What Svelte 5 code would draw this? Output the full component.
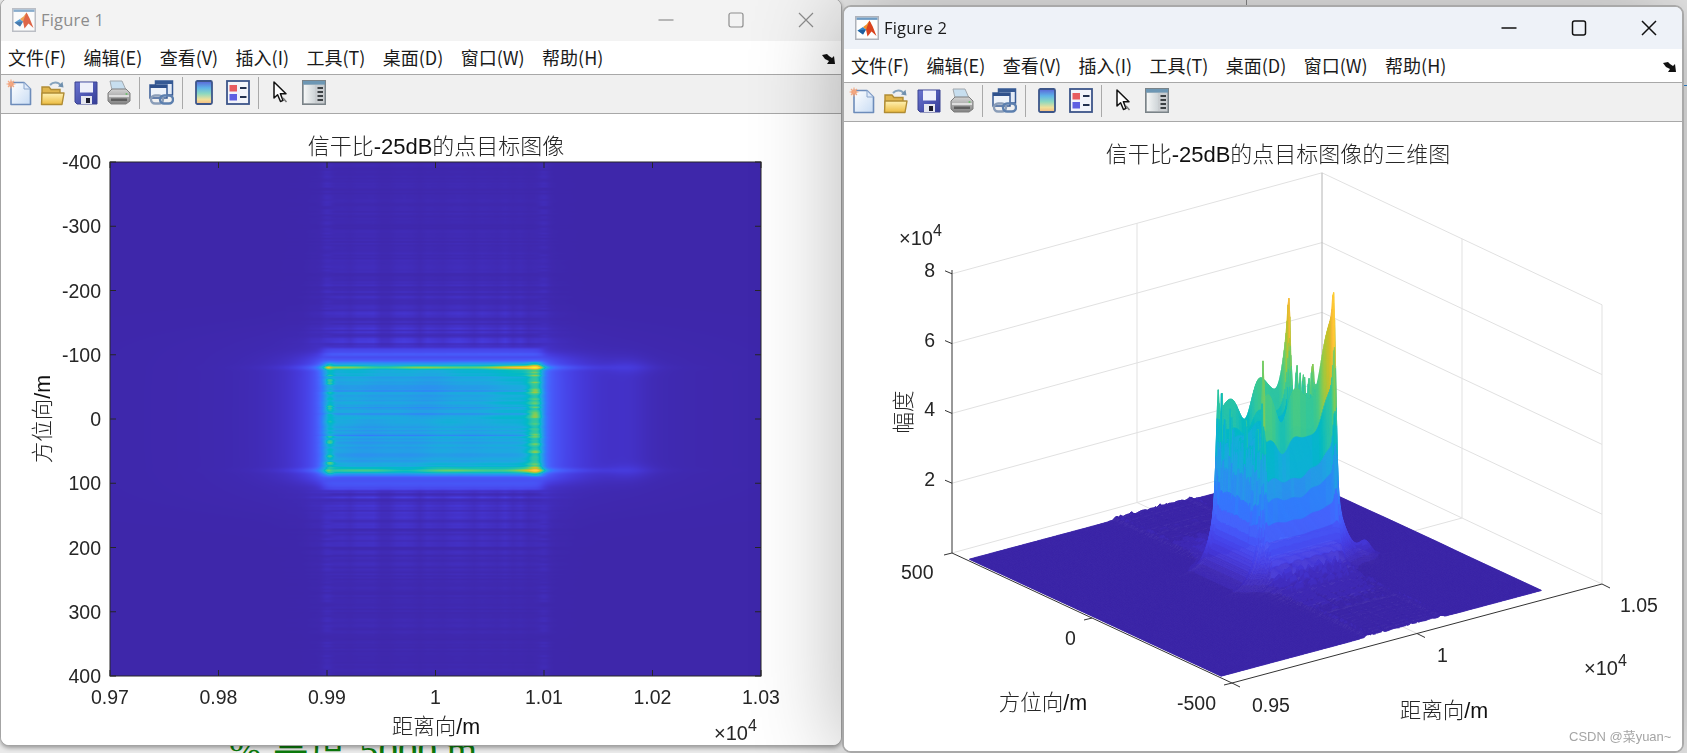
<script>
  import { onMount } from 'svelte';

  const menus = ['文件(F)', '编辑(E)', '查看(V)', '插入(I)', '工具(T)', '桌面(D)', '窗口(W)', '帮助(H)'];

  // ---- Figure 1 axes ----
  const px0 = 110, px1 = 761, py0 = 162, py1 = 676;
  const xTicks = ['0.97', '0.98', '0.99', '1', '1.01', '1.02', '1.03'].map((label, i) => ({ label, x: px0 + (i * (px1 - px0)) / 6 }));
  const yTicks = ['-400', '-300', '-200', '-100', '0', '100', '200', '300', '400'].map((label, i) => ({ label, y: py0 + (i * (py1 - py0)) / 8 }));

  // ---- Figure 2 box (parallel projection) ----
  const F = [1232, 683], Rr = [1602, 584], L = [952, 553], B = [1322, 452];
  const ZS = 34.9;
  const lerp = (a, b, t) => [a[0] + (b[0] - a[0]) * t, a[1] + (b[1] - a[1]) * t];
  const wallZ = [0, 2, 4, 6, 8];
  const mids = { lf: lerp(L, F, 0.5), fr: lerp(F, Rr, 0.5), lb: lerp(L, B, 0.5), br: lerp(B, Rr, 0.5) };
  const zTicks = [['8', 8], ['6', 6], ['4', 4], ['2', 2]];

  // ---- parula ----
  const P = [
    [.2422,.1504,.6603],[.2578,.1818,.7511],[.2706,.2147,.8364],[.2783,.2559,.8991],[.2813,.3006,.9414],[.2795,.3447,.9717],
    [.2699,.3892,.9906],[.2440,.4358,.9988],[.1963,.4847,.9892],[.1786,.5289,.9682],[.1687,.5703,.9359],[.1460,.6091,.9079],
    [.1248,.6459,.8883],[.0952,.6798,.8598],[.0297,.7082,.8163],[.0067,.7312,.7660],[.0964,.7500,.7120],[.1717,.7670,.6554],
    [.2161,.7843,.5923],[.2906,.7973,.5188],[.3909,.8029,.4354],[.5044,.7993,.3480],[.6174,.7876,.2612],[.7242,.7698,.1910],
    [.8203,.7498,.1535],[.9035,.7330,.1774],[.9728,.7298,.2394],[.9970,.7659,.2199],[.9892,.8136,.1885],[.9676,.8639,.1643],
    [.9597,.9135,.1423],[.9691,.9606,.1064],[.9769,.9839,.0805]
  ];
  function parula(c) {
    c = Math.max(0, Math.min(1, c)) * (P.length - 1);
    const i = Math.min(P.length - 2, Math.floor(c)), f = c - i;
    return [0, 1, 2].map((k) => 255 * (P[i][k] * (1 - f) + P[i + 1][k] * f));
  }

  // ---- shared amplitude model (units: 1e4), u = (range-1)*1000, y = azimuth in m ----
  const sig = (t) => 1 / (1 + Math.exp(-t));
  const h = (i) => { const s = Math.sin(i * 127.1 + 311.7) * 43758.5453; return s - Math.floor(s); };
  const sn = (t, seed) => { const i = Math.floor(t), f = t - i; return h(i + seed) * (1 - f) + h(i + 1 + seed) * f; };

  function amp(u, y) {
    const ay = Math.abs(y);
    const n1 = sn(y / 2.6, 7), n2 = sn(y / 2.6, 211), n3 = sn(y / 3.4, 503);
    const rx = sig((u + 10.3) / 0.25) * sig((9.8 - u) / 0.25);
    const ry = sig((88 - ay) / 1.5), ry2 = sig((110 - ay) / 1.5);
    let z = 0.02;
    if (rx > 0.001) {
      const wave = 1 + 0.035 * Math.sin(u * 0.5 + Math.sign(y)) + 0.02 * Math.sin(u * 1.3 + y * 0.02);
      const base = 2.95 * (0.89 + 0.2 * n1) * (n2 > 0.86 ? 0.82 : 1);
      z += (base * wave + 0.85 * Math.exp((u - 9.5) / 3)) * rx * ry;
      const e = Math.exp(-(((ay - 80) / 2.9) ** 2));
      const ridgeWave = 1 + 0.3 * Math.sin(u * 0.75 + (y > 0 ? 0.4 : 2.2));
      const ridge = (y > 0 ? 1.3 : 1.5) * ridgeWave
        + (y > 0 ? 1.0 : 1.2) * Math.exp((u - 9.4) / 4.5)
        + (y > 0 ? 0.8 : 0.95) * Math.exp((u - 9.4) / 0.9);
      z += e * ridge * rx;
      // sharp corner spikes
      const e2 = Math.exp(-(((ay - 80) / 2.4) ** 2));
      z += e2 * (y > 0 ? 0.5 : 0.7) * Math.exp(-(((u - 9.2) / 0.38) ** 2));
      z += e2 * (y > 0 ? 1.1 : 1.6) * Math.exp(-(((u + 9.9) / 0.3) ** 2));
      z += 0.5 * rx * Math.exp(-(((ay - 76) / 9) ** 2));
      const col = (1 - e) * rx * ry;
      z += col * Math.exp(-(((u - 9.3) / 0.7) ** 2)) * (1.0 + 2.2 * n2 * n2 * n2);
      z += col * Math.exp(-(((u + 9.8) / 0.42) ** 2)) * (0.7 + 2.0 * n3 * n3 * n3);
      z += 1.1 * rx * (ry2 - ry) * (0.85 + 0.3 * n1);
    }
    if (ay >= 100) {
      const rxo = sig((u + 10.3) / 1.0) * sig((9.8 - u) / 1.0);
      const lv = (0.06 + 0.42 * Math.exp(-(ay - 110) / 70)) * (0.2 + 1.05 * n1) * (1 - ry2 * 0.9) * (0.65 + 0.7 * sn(u * 1.4, 91));
      z += rxo * lv;
      z += 0.14 * Math.exp(-(((Math.abs(u) - 10) / 0.5) ** 2)) * n2 * (1 - ry2);
      if (ay > 432) z += 0.22 * rxo * Math.max(0, sn(u * 1.7, 33) - 0.55) * n3;
    }
    const d = u < -10.3 ? -10.3 - u : u > 9.8 ? u - 9.8 : 0;
    const hy = sig((97 - ay) / 6);
    const k = u < 0 ? 1.9 : 3.1;
    let hal = hy * 1.5 * Math.exp(-d / k);
    hal += Math.exp(-(((ay - 80) / 4) ** 2)) * 0.8 * Math.exp(-d / (k * 1.15));
    hal += 0.16 * Math.exp(-d / 9) * sig((135 - ay) / 16);
    hal += 0.14 * hy * Math.exp(-(((u - 17.8) / 1.7) ** 2)) + 0.2 * Math.exp(-(((ay - 80) / 10) ** 2)) * Math.exp(-(((u - 17.8) / 2.4) ** 2));
    z += hal * (1 - rx);
    return z;
  }

  let heat, surf;

  function drawHeat() {
    const W = heat.width, H = heat.height, ctx = heat.getContext('2d');
    const im = ctx.createImageData(W, H);
    for (let j = 0; j < H; j++) {
      const y = -400 + (800 * (j + 0.5)) / H;
      for (let i = 0; i < W; i++) {
        const u = -30 + (60 * (i + 0.5)) / W;
        const c = parula(amp(u, y) / 8.2);
        const o = (j * W + i) * 4;
        im.data[o] = c[0]; im.data[o + 1] = c[1]; im.data[o + 2] = c[2]; im.data[o + 3] = 255;
      }
    }
    ctx.putImageData(im, 0, 0);
  }

  function drawSurf() {
    const ctx = surf.getContext('2d');
    ctx.translate(-844, -122);
    const nr = 340, ns = 400, r0 = 0.004, r1 = 0.87, s0 = 0.044, s1 = 0.944;
    const Z = new Float32Array((nr + 1) * (ns + 1));
    for (let i = 0; i <= nr; i++) for (let j = 0; j <= ns; j++) {
      const r = r0 + ((r1 - r0) * i) / nr, s = s0 + ((s1 - s0) * j) / ns;
      Z[i * (ns + 1) + j] = amp(-50 + r * 100, (s - 0.5) * 1000);
    }
    const cols = [];
    for (let k = 0; k < 64; k++) { const c = parula(k / 63); cols.push(`rgb(${c[0] | 0},${c[1] | 0},${c[2] | 0})`); }
    const pt = (i, j) => {
      const r = r0 + ((r1 - r0) * i) / nr, s = s0 + ((s1 - s0) * j) / ns;
      return [F[0] + r * (Rr[0] - F[0]) + s * (L[0] - F[0]), F[1] + r * (Rr[1] - F[1]) + s * (L[1] - F[1]) - Z[i * (ns + 1) + j] * ZS];
    };
    ctx.lineWidth = 0.6;
    for (let i = nr - 1; i >= 0; i--) for (let j = ns - 1; j >= 0; j--) {
      const a = pt(i, j), b = pt(i + 1, j), c = pt(i + 1, j + 1), d = pt(i, j + 1);
      const m = (Z[i * (ns + 1) + j] + Z[(i + 1) * (ns + 1) + j] + Z[(i + 1) * (ns + 1) + j + 1] + Z[i * (ns + 1) + j + 1]) / 4;
      const col = cols[Math.min(63, Math.floor((m / 8.2) * 64))];
      ctx.fillStyle = col; ctx.strokeStyle = col;
      ctx.beginPath();
      ctx.moveTo(a[0], a[1]); ctx.lineTo(b[0], b[1]); ctx.lineTo(c[0], c[1]); ctx.lineTo(d[0], d[1]); ctx.closePath();
      ctx.fill(); ctx.stroke();
    }
  }

  onMount(() => { drawHeat(); drawSurf(); });
</script>

{#snippet logo()}
  <svg class="logo" width="24" height="24" viewBox="0 0 24 24">
    <rect x="0.75" y="0.75" width="22.5" height="22.5" fill="#fdfdfd" stroke="#aeb2ba" stroke-width="1.5" />
    <rect x="1.5" y="1.5" width="21" height="2.4" fill="#6f9cc4" />
    <path d="M2.5 14.5 L8 11 L11 13.5 L8 18.5z" fill="#2f86cc" />
    <path d="M8 11 L11.5 8.5 L14.5 4.5 L16 8 L11 13.5z" fill="#ee8f2c" />
    <path d="M11 13.5 L14.5 4.5 L17.5 10 L21.5 20 L16.5 15.5 L12.5 20.5z" fill="#d9431e" />
    <path d="M2.5 14.5 L11 13.5 L8 18.5z" fill="#1f5d9c" />
  </svg>
{/snippet}

{#snippet toolbar()}
  <div class="toolbar">
    <span class="btn">
      <svg width="26" height="27" viewBox="0 0 26 27">
        <defs><linearGradient id="pg" x1="0" y1="0" x2="1" y2="1"><stop offset="0" stop-color="#fff" /><stop offset="1" stop-color="#c8dcf4" /></linearGradient></defs>
        <path d="M5 3.5 H18 L24.5 10 V25.5 H5z" fill="url(#pg)" stroke="#6d8cba" stroke-width="1.6" stroke-linejoin="round" />
        <path d="M18 3.5 V10 H24.5z" fill="#dfeafa" stroke="#8ba6cc" />
        <circle cx="5" cy="5" r="2.6" fill="#ee8f56" />
        <path d="M5 0.5 V9.5 M0.5 5 H9.5 M2 2 L8 8 M8 2 L2 8" stroke="#f2a884" stroke-width="1.1" />
      </svg>
    </span>
    <span class="btn">
      <svg width="25" height="26" viewBox="0 0 25 26">
        <defs><linearGradient id="fg" x1="0" y1="0" x2="0" y2="1"><stop offset="0" stop-color="#fff2b4" /><stop offset="1" stop-color="#ecbb3f" /></linearGradient></defs>
        <path d="M2 24 V7 H9 L11 9.5 H20 V24z" fill="#e0b64e" stroke="#b08c34" stroke-width="1.4" />
        <path d="M1.5 24.5 L2 13 H24 L22 24.5z" fill="url(#fg)" stroke="#b08c34" stroke-width="1.4" stroke-linejoin="round" />
        <path d="M10 5 C13 1.5 18 1.5 20.5 5" fill="none" stroke="#86a3bd" stroke-width="2" />
        <path d="M18 6.5 L23.5 7.5 L22.5 1.8z" fill="#6f90ae" />
      </svg>
    </span>
    <span class="btn">
      <svg width="24" height="24" viewBox="0 0 24 24">
        <defs><linearGradient id="sg" x1="0" y1="0" x2="1" y2="1"><stop offset="0" stop-color="#6a74d0" /><stop offset="1" stop-color="#343d98" /></linearGradient></defs>
        <path d="M1 1 H23 V23 H3 L1 21z" fill="url(#sg)" stroke="#3a4290" />
        <rect x="6" y="1.5" width="13" height="10" fill="#eef0fb" />
        <rect x="7" y="15" width="11" height="8" fill="#e4e6ef" />
        <rect x="12" y="17" width="4" height="5" fill="#1c1c2c" />
      </svg>
    </span>
    <span class="btn">
      <svg width="24" height="25" viewBox="0 0 24 25">
        <defs><linearGradient id="prg" x1="0" y1="0" x2="0" y2="1"><stop offset="0" stop-color="#d4d4d4" /><stop offset="1" stop-color="#828282" /></linearGradient></defs>
        <path d="M5 10 L3 1 H15 L19 10z" fill="#c7deef" stroke="#a2a8ae" />
        <path d="M1 13 L5 9 H19 L23 13 V21 L19 24 H4 L1 21z" fill="url(#prg)" stroke="#7d7d7d" />
        <path d="M2 16 H22" stroke="#efefef" stroke-width="1.5" />
        <rect x="4" y="18.5" width="16" height="2.5" fill="#5d5d5d" />
        <circle cx="19.5" cy="14" r="1.1" fill="#6cc06c" />
      </svg>
    </span>
    <span class="sep"></span>
    <span class="btn">
      <svg width="25" height="25" viewBox="0 0 25 25">
        <rect x="6.5" y="1" width="17" height="14" fill="#e3ebf6" stroke="#365a94" stroke-width="1.5" />
        <rect x="6.5" y="1" width="17" height="3" fill="#365a94" />
        <rect x="1" y="5" width="17" height="13" fill="#eef3fa" stroke="#365a94" stroke-width="1.5" />
        <rect x="1" y="5" width="17" height="3" fill="#2f518c" />
        <rect x="2" y="15.5" width="12" height="8" rx="4" fill="none" stroke="#8a9db8" stroke-width="2.4" />
        <rect x="11" y="15.5" width="13" height="8" rx="4" fill="none" stroke="#5c7fae" stroke-width="2.4" />
      </svg>
    </span>
    <span class="sep"></span>
    <span class="btn">
      <svg width="18" height="25" viewBox="0 0 18 25">
        <defs><linearGradient id="cb" x1="0" y1="0" x2="0" y2="1"><stop offset="0" stop-color="#5a63d8" /><stop offset=".3" stop-color="#5fb4e8" /><stop offset=".55" stop-color="#8cd8c0" /><stop offset=".8" stop-color="#f0e09a" /><stop offset="1" stop-color="#f4b880" /></linearGradient></defs>
        <rect x="1" y="1" width="16" height="23" rx="1.5" fill="url(#cb)" stroke="#3c5589" stroke-width="1.8" />
      </svg>
    </span>
    <span class="btn">
      <svg width="24" height="25" viewBox="0 0 24 25">
        <rect x="1" y="1" width="22" height="23" fill="#f2f4fa" stroke="#3c5589" stroke-width="1.8" />
        <rect x="3.5" y="5" width="7.5" height="6.5" fill="#e85c60" />
        <rect x="3.5" y="14" width="7.5" height="6.5" fill="#5f60e2" />
        <path d="M14 8 H20.5 M14 17 H20.5" stroke="#23314f" stroke-width="2" />
      </svg>
    </span>
    <span class="sep"></span>
    <span class="btn">
      <svg width="15" height="23" viewBox="0 0 15 23">
        <path d="M1 1 V17 L4.6 13.8 L7.5 20.5 L10 19.4 L7.4 12.8 L13 12.8z" fill="#fff" stroke="#111" stroke-width="1.5" stroke-linejoin="round" />
        <path d="M10 17 L13.5 21" stroke="#777" stroke-width="1.5" />
      </svg>
    </span>
    <span class="btn">
      <svg width="24" height="25" viewBox="0 0 24 25">
        <defs><linearGradient id="lp" x1="0" y1="0" x2="1" y2="0"><stop offset="0" stop-color="#f4f6f6" /><stop offset="1" stop-color="#cfd5d8" /></linearGradient></defs>
        <rect x="0.75" y="0.75" width="22.5" height="23.5" fill="#c9cdd0" stroke="#7a8388" stroke-width="1.5" />
        <rect x="1" y="1" width="22" height="3.6" fill="#6d97b4" />
        <rect x="2" y="5" width="11" height="18" fill="url(#lp)" />
        <path d="M15.5 8 H21 M15.5 12 H21 M15.5 16 H21 M15.5 20 H21" stroke="#3c4144" stroke-width="2" />
      </svg>
    </span>
  </div>
{/snippet}

{#snippet menubar()}
  <div class="menubar">
    {#each menus as m}<span>{m}</span>{/each}
    <svg class="dock" width="13" height="10" viewBox="0 0 13 10"><path d="M0 1 L5 0 L7 2 L10 4 L12 2 L13 10 L5 10 L7 7 L3 5z" fill="#111" /></svg>
  </div>
{/snippet}

<div class="desktop">
  <div class="behind">% 高度 5000 m</div>
  <span class="tick-a"></span>
  <span class="tick-b"></span>

  <section class="win win1">
    <header class="title">
      {@render logo()}
      <span class="name">Figure 1</span>
      <div class="controls">
        <svg width="16" height="16" viewBox="0 0 16 16"><path d="M0.5 8 H15.5" /></svg>
        <svg width="16" height="16" viewBox="0 0 16 16"><rect x="1" y="1" width="14" height="14" rx="2" /></svg>
        <svg width="16" height="16" viewBox="0 0 16 16"><path d="M1 1 L15 15 M15 1 L1 15" /></svg>
      </div>
    </header>
    {@render menubar()}
    {@render toolbar()}
    <div class="fig">
      <canvas class="heat" width="651" height="514" bind:this={heat}></canvas>
      <svg class="overlay" width="840" height="632" viewBox="1 114 840 632">
        <text class="t-title" x="436" y="154" text-anchor="middle">信干比<tspan class="lat">-25dB</tspan>的点目标图像</text>
        <rect x={px0} y={py0} width={px1 - px0} height={py1 - py0} class="box" />
        {#each xTicks as t}
          <path class="tk" d="M{t.x} {py0} v6 M{t.x} {py1} v-6" />
          <text class="tl" x={t.x} y="704" text-anchor="middle">{t.label}</text>
        {/each}
        {#each yTicks as t}
          <path class="tk" d="M{px0} {t.y} h6 M{px1} {t.y} h-6" />
          <text class="tl" x="101" y={t.y + 7} text-anchor="end">{t.label}</text>
        {/each}
        <text class="al" x="436" y="734" text-anchor="middle">距离向<tspan class="lat">/m</tspan></text>
        <text class="al" transform="translate(50 419) rotate(-90)" text-anchor="middle">方位向<tspan class="lat">/m</tspan></text>
        <text class="ex" x="714" y="740">×10<tspan class="sup" dy="-9">4</tspan></text>
      </svg>
    </div>
  </section>

  <section class="win win2">
    <header class="title">
      {@render logo()}
      <span class="name">Figure 2</span>
      <div class="controls">
        <svg width="16" height="16" viewBox="0 0 16 16"><path d="M0.5 8 H15.5" /></svg>
        <svg width="16" height="16" viewBox="0 0 16 16"><rect x="1.5" y="1" width="13" height="14" rx="2" /></svg>
        <svg width="16" height="16" viewBox="0 0 16 16"><path d="M1 1 L15 15 M15 1 L1 15" /></svg>
      </div>
    </header>
    {@render menubar()}
    {@render toolbar()}
    <div class="fig">
      <svg class="overlay" width="838" height="629" viewBox="844 122 838 629">
        <text class="t-title" x="1278" y="162" text-anchor="middle">信干比<tspan class="lat">-25dB</tspan>的点目标图像的三维图</text>
        {#each wallZ as z}
          <path class="grid" d="M{L[0]} {L[1] - z * ZS} L{B[0]} {B[1] - z * ZS} L{Rr[0]} {Rr[1] - z * ZS}" />
        {/each}
        <path class="back" d="M{B[0]} {B[1]} V{B[1] - 8 * ZS}" />
        <path class="grid" d="M{mids.lb[0]} {mids.lb[1]} V{mids.lb[1] - 8 * ZS} M{mids.br[0]} {mids.br[1]} V{mids.br[1] - 8 * ZS} M{Rr[0]} {Rr[1]} V{Rr[1] - 8 * ZS}" />
        <path class="grid" d="M{mids.lf[0]} {mids.lf[1]} L{mids.br[0]} {mids.br[1]} M{mids.fr[0]} {mids.fr[1]} L{mids.lb[0]} {mids.lb[1]}" />
        <path class="ax" d="M{L[0]} 270 V{L[1]} L{F[0]} {F[1]} L{Rr[0]} {Rr[1]}" />
        {#each zTicks as z}
          <path class="ax" d="M{L[0]} {L[1] - z[1] * ZS} l-7 -3" />
          <text class="tl" x="935" y={L[1] - z[1] * ZS + 3} text-anchor="end">{z[0]}</text>
        {/each}
        <path class="ax" d="M{L[0]} {L[1]} l-8 2 M{mids.lf[0]} {mids.lf[1]} l-8 2 M{F[0]} {F[1]} l-8 2 M{F[0]} {F[1]} l8 4 M{mids.fr[0]} {mids.fr[1]} l8 4 M{Rr[0]} {Rr[1]} l8 4" />
        <text class="tl" x="901" y="579">500</text>
        <text class="tl" x="1065" y="645">0</text>
        <text class="tl" x="1177" y="710">-500</text>
        <text class="tl" x="1252" y="712">0.95</text>
        <text class="tl" x="1437" y="662">1</text>
        <text class="tl" x="1620" y="612">1.05</text>
        <text class="ex" x="899" y="245">×10<tspan class="sup" dy="-9">4</tspan></text>
        <text class="ex" x="1584" y="675">×10<tspan class="sup" dy="-9">4</tspan></text>
        <text class="al" x="1043" y="710" text-anchor="middle">方位向<tspan class="lat">/m</tspan></text>
        <text class="al" x="1444" y="718" text-anchor="middle">距离向<tspan class="lat">/m</tspan></text>
        <text class="al" transform="translate(911 412) rotate(-90)" text-anchor="middle">幅度</text>
        <text class="mark" x="1569" y="741">CSDN @菜yuan~</text>
      </svg>
      <canvas class="surf" width="838" height="629" bind:this={surf}></canvas>
    </div>
  </section>
</div>

<style>
  :global(body) { margin: 0; overflow: hidden; background: #e9e9e9; }
  .desktop { position: relative; width: 1687px; height: 753px; overflow: hidden; background: #eaeaea; font-family: "Noto Sans CJK SC", sans-serif; }

  .behind { position: absolute; left: 229px; top: 725px; font: 39px/52px "Liberation Serif", "Noto Sans CJK SC", serif; color: #0c7a0c; white-space: nowrap; }
  .tick-a { position: absolute; left: 1246px; top: 0; width: 1px; height: 6px; background: #8a8a8a; }
  .tick-b { position: absolute; left: 1684px; top: 85px; width: 3px; height: 1px; background: #2d86d6; }

  .win { position: absolute; display: flex; flex-direction: column; box-sizing: border-box; background: #fff; overflow: hidden; }
  .win1 { left: 0; top: -2px; width: 842px; height: 748px; border: 1px solid #a4a4a4; border-radius: 9px; box-shadow: 0 2px 4px rgba(0, 0, 0, .35); }
  .win2 { left: 842px; top: 5px; width: 842px; height: 748px; border: 2px solid #a9a9a9; border-radius: 9px; box-shadow: 0 0 90px rgba(0, 0, 0, .3); }
  .win1 .title { background: #f3f3f3; }
  .win2 .title { background: #eef2f8; }

  .title { flex: none; height: 42px; box-sizing: border-box; display: flex; align-items: center; padding: 0 0 1px 11px; }
  .logo { flex: none; }
  .win1 .logo { opacity: .8; }
  .name { margin-left: 5px; padding-bottom: 1px; font: 16.5px "Open Sans", sans-serif; letter-spacing: .2px; }
  .win1 .name { color: #8c8c8c; }
  .win2 .name { color: #1a1a1a; }

  .controls { margin-left: auto; display: flex; align-items: center; gap: 54px; }
  .controls svg { fill: none; stroke-width: 1.2; }
  .win1 .controls { padding-right: 27px; }
  .win1 .controls svg { stroke: #8e8e8e; }
  .win2 .controls { padding-right: 25px; }
  .win2 .controls svg { stroke: #111; stroke-width: 1.5; }

  .menubar { flex: none; position: relative; height: 34px; box-sizing: border-box; border-bottom: 1px solid #a8a8a8; background: #fff; display: flex; align-items: center; gap: 17.4px; padding: 0 0 2px 7px; font: 18px "Noto Sans CJK SC", sans-serif; color: #1a1a1a; white-space: nowrap; }
  .dock { position: absolute; right: 6px; top: 13px; }

  .toolbar { flex: none; height: 39px; box-sizing: border-box; border-bottom: 1px solid #a8a8a8; background: #f0f0f0; display: flex; align-items: center; padding: 0 0 3px 1px; }
  .btn { flex: none; width: 33.5px; display: flex; justify-content: center; align-items: center; }
  .sep { flex: none; width: 1px; height: 32px; margin: 0 5px 0 3px; background: #a9a9a9; }

  .fig { flex: 1; position: relative; background: #fff; }
  .overlay { position: absolute; left: 0; top: 0; }
  .heat { position: absolute; left: 109px; top: 48px; }
  .surf { position: absolute; left: 0; top: 0; }

  text { font-family: "Liberation Sans", "Noto Sans CJK SC", sans-serif; fill: #262626; }
  .t-title { font-size: 22px; font-weight: 300; }
  .lat { font-weight: 400; fill: #111; }
  .tl { font-size: 19.5px; }
  .ex { font-size: 20px; }
  .sup { font-size: 16px; }
  .al { font-size: 21.5px; font-weight: 300; }
  .mark { font-size: 13px; fill: #a5a5a5; }
  .box { fill: none; stroke: #262626; stroke-width: 1; }
  .tk { fill: none; stroke: #262626; stroke-width: 1; }
  .grid { fill: none; stroke: #e1e1e1; stroke-width: 1; }
  .back { fill: none; stroke: #b4b4b4; stroke-width: 1; }
  .ax { fill: none; stroke: #333; stroke-width: 1; }
</style>
